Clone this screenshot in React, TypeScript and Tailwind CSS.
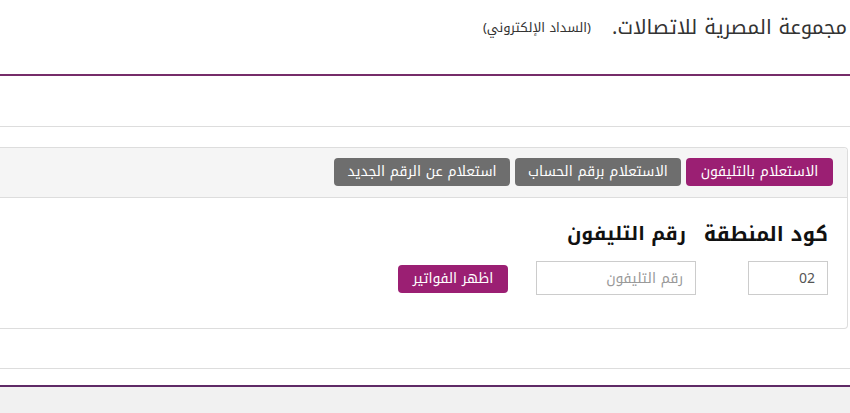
import React from "react";

const font = { fontFamily: '"Noto Kufi Arabic", "Noto Sans Arabic", "DejaVu Sans", sans-serif' };

export default function App() {
  return (
    <div dir="rtl" className="w-[850px] h-[413px] overflow-hidden bg-white text-[#333]" style={font}>
      {/* header */}
      <header className="h-[76px] border-b-2 border-[#762c69] flex items-start pt-[12px] pr-[3px] gap-[21px]">
        <h1 className="text-[20px] leading-[30px] text-[#333] font-normal whitespace-nowrap">مجموعة المصرية للاتصالات.</h1>
        <small className="text-[13px] leading-[30px] mt-[1px] text-[#333] whitespace-nowrap">(السداد الإلكتروني)</small>
      </header>

      <div className="h-[51px] border-b border-[#dddddd]" />

      <div className="pt-[20px] pb-[39px] border-b border-[#dddddd]">
        <div className="mr-[2px] border-y border-r border-[#dddddd] rounded-r-[4px] bg-white">
          <div className="h-[50px] bg-[#f5f5f5] border-b border-[#dddddd] rounded-tr-[4px] flex items-start pt-[10px] pr-[14px] gap-[5px]">
            <button className="w-[147px] h-[28px] rounded-[4px] bg-[#9b1f73] text-white text-[14px] leading-[28px] text-center whitespace-nowrap">الاستعلام بالتليفون</button>
            <button className="w-[166px] h-[28px] rounded-[4px] bg-[#6e6e6e] text-white text-[14px] leading-[28px] text-center whitespace-nowrap">الاستعلام برقم الحساب</button>
            <button className="w-[176px] h-[28px] rounded-[4px] bg-[#6e6e6e] text-white text-[14px] leading-[28px] text-center whitespace-nowrap">استعلام عن الرقم الجديد</button>
          </div>
          <div className="h-[130px] pt-[19px] pr-[19px] flex items-end pb-[33px]">
            <div className="w-[116px] flex flex-col items-start">
              <label className="text-[20px] leading-[34px] font-bold text-[#111] whitespace-nowrap mb-[10px]">كود المنطقة</label>
              <input
                dir="ltr"
                defaultValue="02"
                className="w-[80px] h-[34px] border border-[#cccccc] px-[12px] text-right text-[14px] text-[#555] outline-none"
                style={font}
              />
            </div>
            <div className="w-[160px] mr-[16px] flex flex-col items-start">
              <label className="mr-[10px] text-[19px] leading-[34px] font-bold text-[#111] whitespace-nowrap mb-[10px]">رقم التليفون</label>
              <input
                placeholder="رقم التليفون"
                className="w-[160px] h-[34px] border border-[#cccccc] px-[12px] text-[14px] text-[#555] placeholder:text-[#999] outline-none"
                style={font}
              />
            </div>
            <button className="mr-[28px] mb-[2px] w-[110px] h-[28px] rounded-[4px] bg-[#9b1f73] text-white text-[14px] leading-[28px] text-center whitespace-nowrap">اظهر الفواتير</button>
          </div>
        </div>
      </div>

      <div className="h-[16px]" />
      <div className="h-[2px] bg-[#5f2a66]" />
      <div className="h-[27px] bg-[#f1f1f1]" />
    </div>
  );
}
